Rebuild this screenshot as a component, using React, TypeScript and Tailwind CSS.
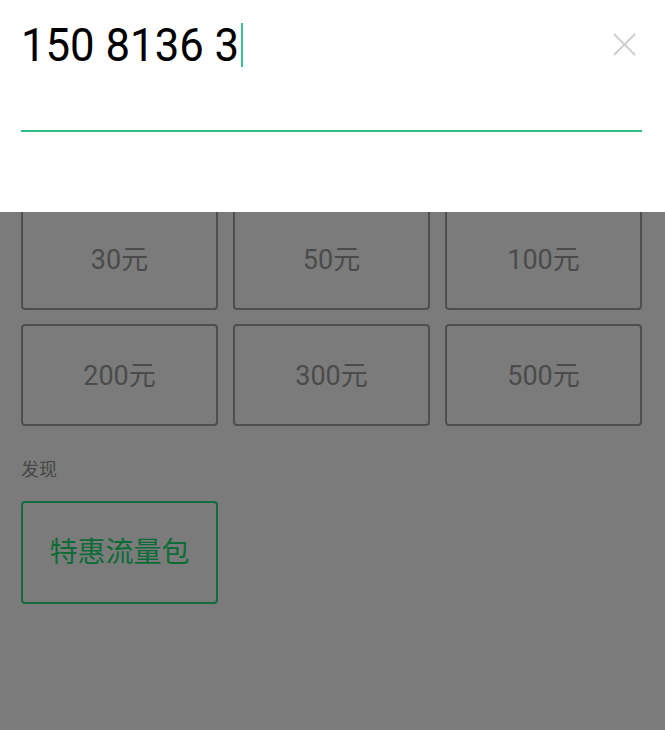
import React from "react";

const amounts = ["30元", "50元", "100元", "200元", "300元", "500元"];

export default function App() {
  return (
    <div
      className="relative w-[665px] h-[730px] overflow-hidden bg-[#7b7b7b]"
      style={{ fontFamily: '"Roboto", "Noto Sans CJK SC", sans-serif' }}
    >
      <div className="pt-[208px] pl-[21px] pr-[23px]">
        <div className="grid grid-cols-3 gap-x-[15px] gap-y-[14px]">
          {amounts.map((a) => (
            <div
              key={a}
              className="h-[102px] rounded-[4px] border-2 border-[#4f4f4f] flex items-center justify-center text-[27px] text-[#4b4b4b]"
            >
              <span className="mt-[2px]">{a}</span>
            </div>
          ))}
        </div>
        <div className="mt-[32px] text-[18px] leading-[24px] text-[#474747]">发现</div>
        <div className="mt-[19px] grid grid-cols-3 gap-x-[15px]">
          <div className="h-[103px] rounded-[4px] border-2 border-[#126c40] flex items-center justify-center text-[28px] text-[#0d6b38]">
            特惠流量包
          </div>
        </div>
      </div>

      <div className="absolute left-0 top-0 w-full h-[212px] bg-white pl-[21px] pr-[23px]">
        <div className="flex items-center justify-between h-[90px]">
          <div className="flex items-center">
            <span className="text-[46px] leading-[46px] text-black origin-left scale-x-[0.95] inline-block">
              150 8136 3
            </span>
            <span className="inline-block w-[2px] h-[44px] bg-[#3cc08d] ml-[-10px]" />
          </div>
          <svg width="23" height="23" viewBox="0 0 24 24" className="mr-[6px] mt-[-2px]">
            <path d="M1 1 L23 23 M23 1 L1 23" stroke="#cfcfcf" strokeWidth="2" fill="none" />
          </svg>
        </div>
        <div className="mt-[40px] h-[2px] bg-[#2ebd85]" />
      </div>
    </div>
  );
}
